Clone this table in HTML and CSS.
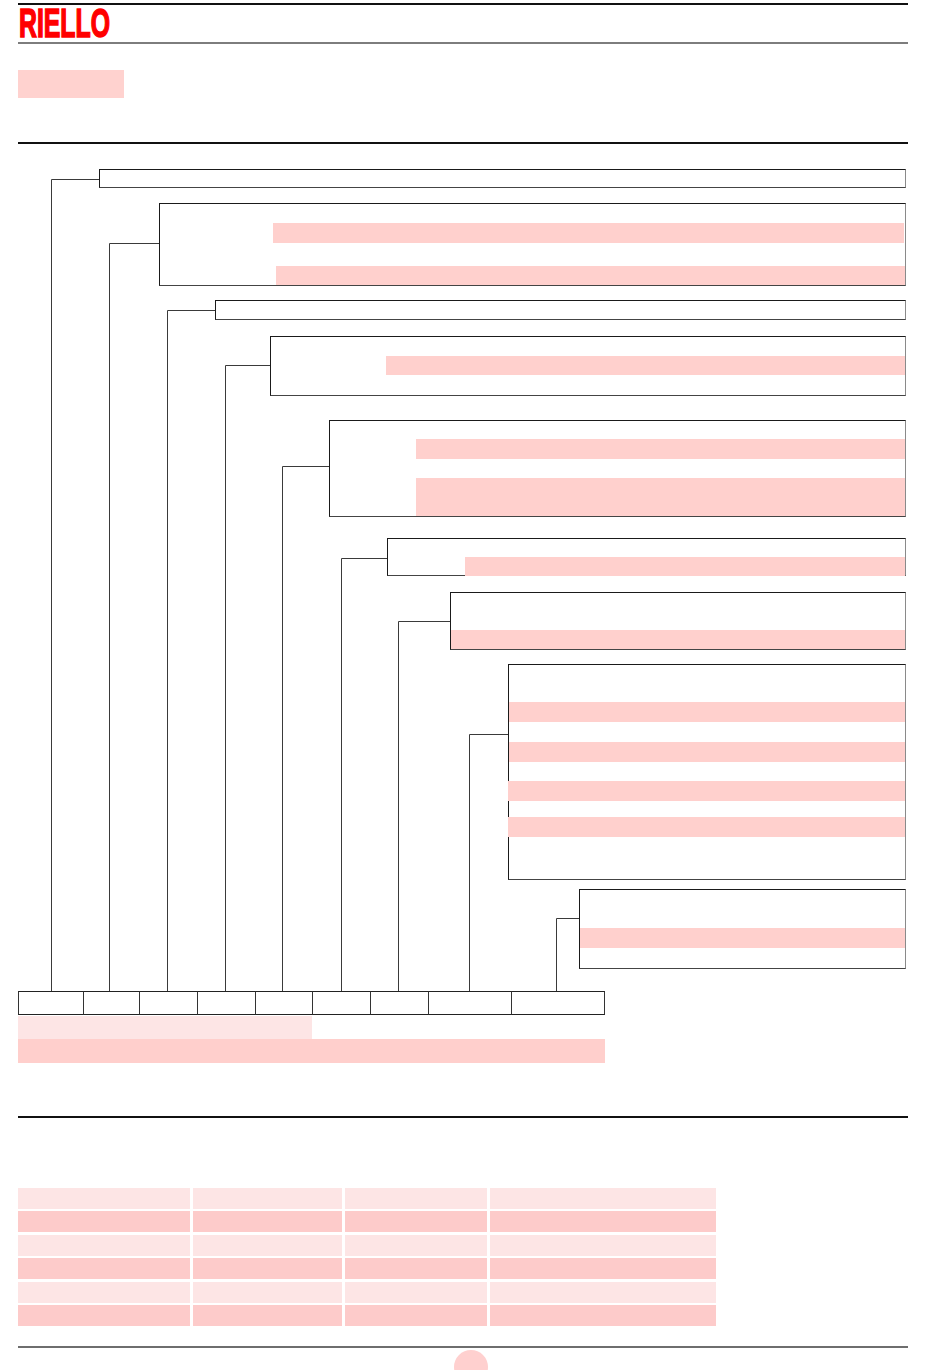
FILE: index.html
```html
<!DOCTYPE html>
<html lang="it">
<head>
<meta charset="utf-8">
<title>Riello</title>
<link rel="stylesheet" href="styles.css">
</head>
<body>
<div class="page">
  <header class="masthead">
    <span class="logo">RIELLO</span>
  </header>
  <div class="title-tag"></div>
  <hr class="rule rule-dark rule-top">

  <section class="tree">
    <svg class="wires" width="890" height="847" viewBox="0 0 890 847" aria-hidden="true">
      <polyline points="33.5,847 33.5,35.5 81,35.5"/>
      <polyline points="91.5,847 91.5,99.5 141,99.5"/>
      <polyline points="149.5,847 149.5,166.5 197,166.5"/>
      <polyline points="207.5,847 207.5,221.5 252,221.5"/>
      <polyline points="264.5,847 264.5,322.5 311,322.5"/>
      <polyline points="323.5,847 323.5,414.5 369,414.5"/>
      <polyline points="380.5,847 380.5,477.5 432,477.5"/>
      <polyline points="451.5,847 451.5,590.5 490,590.5"/>
      <polyline points="538.5,847 538.5,774.5 561,774.5"/>
    </svg>

    <div class="node n1"></div>
    <div class="node n2">
      <div class="bar b2a"></div>
      <div class="bar b2b"></div>
    </div>
    <div class="node n3"></div>
    <div class="node n4">
      <div class="bar b4a"></div>
    </div>
    <div class="node n5">
      <div class="bar b5a"></div>
      <div class="bar b5b"></div>
    </div>
    <div class="node n6">
      <div class="bar b6a"></div>
    </div>
    <div class="node n7">
      <div class="bar b7a"></div>
    </div>
    <div class="node n8">
      <div class="bar b8a"></div>
      <div class="bar b8b"></div>
      <div class="bar b8c"></div>
      <div class="bar b8d"></div>
    </div>
    <div class="node n9">
      <div class="bar b9a"></div>
    </div>

    <div class="code-row">
      <div class="cell"></div><div class="cell"></div><div class="cell"></div>
      <div class="cell"></div><div class="cell"></div><div class="cell"></div>
      <div class="cell"></div><div class="cell"></div><div class="cell"></div>
    </div>
    <div class="code-label-light"></div>
    <div class="code-label"></div>
  </section>

  <hr class="rule rule-dark rule-mid">

  <div class="spec-table">
    <div class="c l"></div><div class="c l"></div><div class="c l"></div><div class="c l"></div>
    <div class="c d"></div><div class="c d"></div><div class="c d"></div><div class="c d"></div>
    <div class="c l"></div><div class="c l"></div><div class="c l"></div><div class="c l"></div>
    <div class="c d"></div><div class="c d"></div><div class="c d"></div><div class="c d"></div>
    <div class="c l"></div><div class="c l"></div><div class="c l"></div><div class="c l"></div>
    <div class="c d"></div><div class="c d"></div><div class="c d"></div><div class="c d"></div>
  </div>

  <footer class="foot">
    <div class="page-num"></div>
  </footer>
</div>
</body>
</html>
```

FILE: styles.css
```css
* { box-sizing: border-box; }

html, body {
  margin: 0;
  padding: 0;
  background: #fff;
}

.page {
  width: 950px;
  height: 1370px;
  overflow: hidden;
  padding: 3px 42px 0 18px;
  font-family: "Liberation Sans", Arial, sans-serif;
}

/* header */
.masthead {
  height: 41px;
  border-top: 2px solid #111;
  border-bottom: 2px solid #7d7d7d;
}

.logo {
  display: inline-block;
  font-weight: bold;
  font-size: 40px;
  line-height: 37px;
  color: #ff0000;
  letter-spacing: 0;
  -webkit-text-stroke: 1.6px #ff0000;
  transform: scaleX(0.62);
  transform-origin: 0 0;
  margin-left: 1px;
}

.title-tag {
  width: 106px;
  height: 28px;
  margin-top: 26px;
  background: #ffd2cf;
}

.rule {
  margin: 0;
  border: 0;
  height: 0;
}
.rule-dark { border-top: 2px solid #111; }
.rule-top { margin-top: 44px; }
.rule-mid { margin-top: 53px; }

/* tree diagram */
.tree {
  position: relative;
  display: flex;
  flex-direction: column;
  align-items: flex-start;
}

.wires {
  position: absolute;
  left: 0;
  top: 0;
  fill: none;
  stroke: #3a3a3a;
  stroke-width: 1;
  pointer-events: none;
}

.node {
  display: flex;
  flex-direction: column;
  align-items: stretch;
  border: 1px solid #1a1a1a;
  border-right-color: #8a8a8a;
  border-bottom-color: #444;
  background: #fff;
  position: relative;
}

.bar { background: #ffd0cd; flex: none; }

.n1 { margin: 25px 0 0 81px;  width: 807px; height: 19px; }
.n2 { margin: 15px 0 0 141px; width: 747px; height: 83px; }
.n3 { margin: 14px 0 0 197px; width: 691px; height: 20px; }
.n4 { margin: 16px 0 0 252px; width: 636px; height: 60px; }
.n5 { margin: 24px 0 0 311px; width: 577px; height: 97px; }
.n6 { margin: 21px 0 0 369px; width: 519px; height: 38px; }
.n7 { margin: 16px 0 0 432px; width: 456px; height: 58px; }
.n8 { margin: 14px 0 0 490px; width: 398px; height: 216px; }
.n9 { margin: 9px 0 0 561px;  width: 327px; height: 80px; }

.b2a { margin: 19px 1px 0 113px; height: 20px; }
.b2b { margin: 23px 0 0 116px; height: 19px; }
.b4a { margin: 19px 0 0 115px; height: 19px; }
.b5a { margin: 18px 0 0 86px; height: 20px; }
.b5b { margin: 19px 0 0 86px; height: 38px; }
.b6a { margin: 18px 0 0 77px; height: 19px; }
.b7a { margin: 37px 0 0 0; height: 19px; }
.b8a { margin: 37px 0 0 0; height: 20px; }
.b8b { margin: 20px 0 0 0; height: 20px; }
.b8c { margin: 19px 0 0 -1px; height: 20px; }
.b8d { margin: 16px 0 0 -1px; height: 20px; }
.b9a { margin: 38px 0 0 0; height: 20px; }

.code-row {
  margin-top: 22px;
  display: grid;
  grid-template-columns: 65px 56px 58px 58px 57px 58px 58px 83px 94px;
  height: 24px;
  position: relative;
}
.code-row .cell {
  border-top: 1px solid #222;
  border-bottom: 1px solid #222;
  border-left: 1px solid #333;
  background: #fff;
}
.code-row .cell:last-child { border-right: 1px solid #333; }

.code-label-light {
  margin-top: 1px;
  width: 294px;
  height: 23px;
  background: #fde5e5;
}
.code-label {
  width: 587px;
  height: 24px;
  background: #ffcfcc;
}

/* table */
.spec-table {
  margin-top: 70px;
  display: grid;
  grid-template-columns: 172px 149px 142px 226px;
  grid-auto-rows: 21px;
  column-gap: 3px;
  row-gap: 2.4px;
}
.spec-table .l { background: #fde5e5; }
.spec-table .d { background: #fdcbca; }

/* footer */
.foot {
  margin-top: 20px;
  border-top: 2px solid #6e6e6e;
  padding-top: 2px;
}
.page-num {
  margin-left: 436px;
  width: 34px;
  height: 34px;
  border-radius: 50%;
  background: #ffd0cf;
}
```
